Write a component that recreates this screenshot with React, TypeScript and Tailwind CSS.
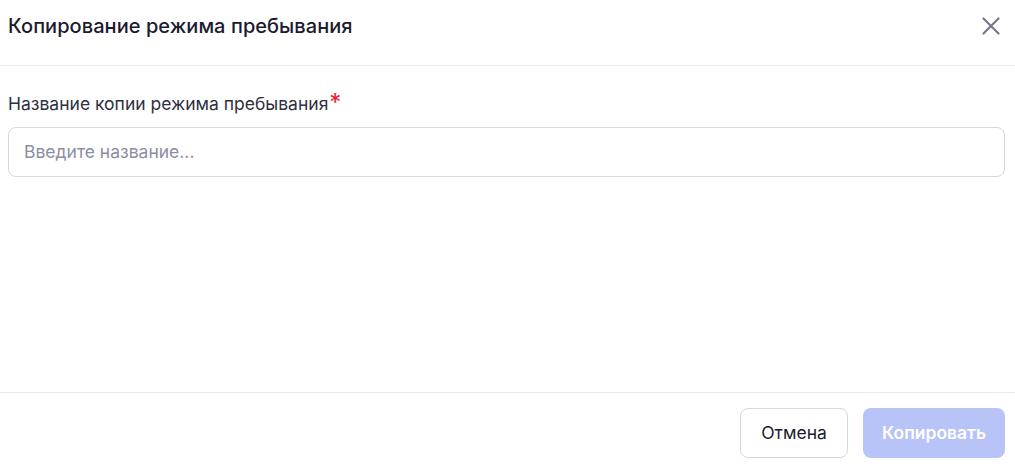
import React from "react";

export default function App() {
  return (
    <div
      className="w-[1015px] h-[466px] bg-white flex flex-col"
      style={{ fontFamily: "Inter, 'Noto Sans', sans-serif" }}
    >
      <div className="h-[66px] shrink-0 flex items-start justify-between pl-2 pr-[15px] pt-[13px] border-b border-[#e8e8ef]">
        <h1 className="text-[20px] leading-[26px] font-medium text-[#1b1b2f] tracking-[0.05px]">
          Копирование режима пребывания
        </h1>
        <button className="mt-[4px] w-[18px] h-[18px] flex items-center justify-center text-[#77778f]">
          <svg width="18" height="18" viewBox="0 0 18 18" fill="none">
            <path d="M1.5 1.5L16.5 16.5M16.5 1.5L1.5 16.5" stroke="currentColor" strokeWidth="2.2" strokeLinecap="round" />
          </svg>
        </button>
      </div>
      <div className="flex-1 pl-2 pr-[10px] pt-[25px]">
        <label className="flex items-start text-[17.5px] leading-[26px] text-[#2f2f3f]">
          Название копии режима пребывания
          <span className="text-[#e5222f] text-[24px] leading-[22px] ml-[1px] mt-[1px]">*</span>
        </label>
        <div className="mt-[10px] h-[50px] rounded-lg border border-[#d6d6df] flex items-center px-[15px]">
          <input
            className="w-full outline-none text-[17.5px] text-[#1b1b2f] placeholder:text-[#8d8da3] bg-transparent"
            placeholder="Введите название..."
          />
        </div>
      </div>
      <div className="shrink-0 border-t border-[#e8e8ef] pt-[15px] pb-2 pr-[10px] flex justify-end gap-[15px]">
        <button className="w-[108px] h-[50px] rounded-lg border border-[#d6d6df] bg-white text-[17.5px] text-[#1b1b2f]">
          Отмена
        </button>
        <button className="w-[142px] h-[50px] rounded-lg bg-[#b8c3f8] text-[17.5px] font-semibold text-white">
          Копировать
        </button>
      </div>
    </div>
  );
}
